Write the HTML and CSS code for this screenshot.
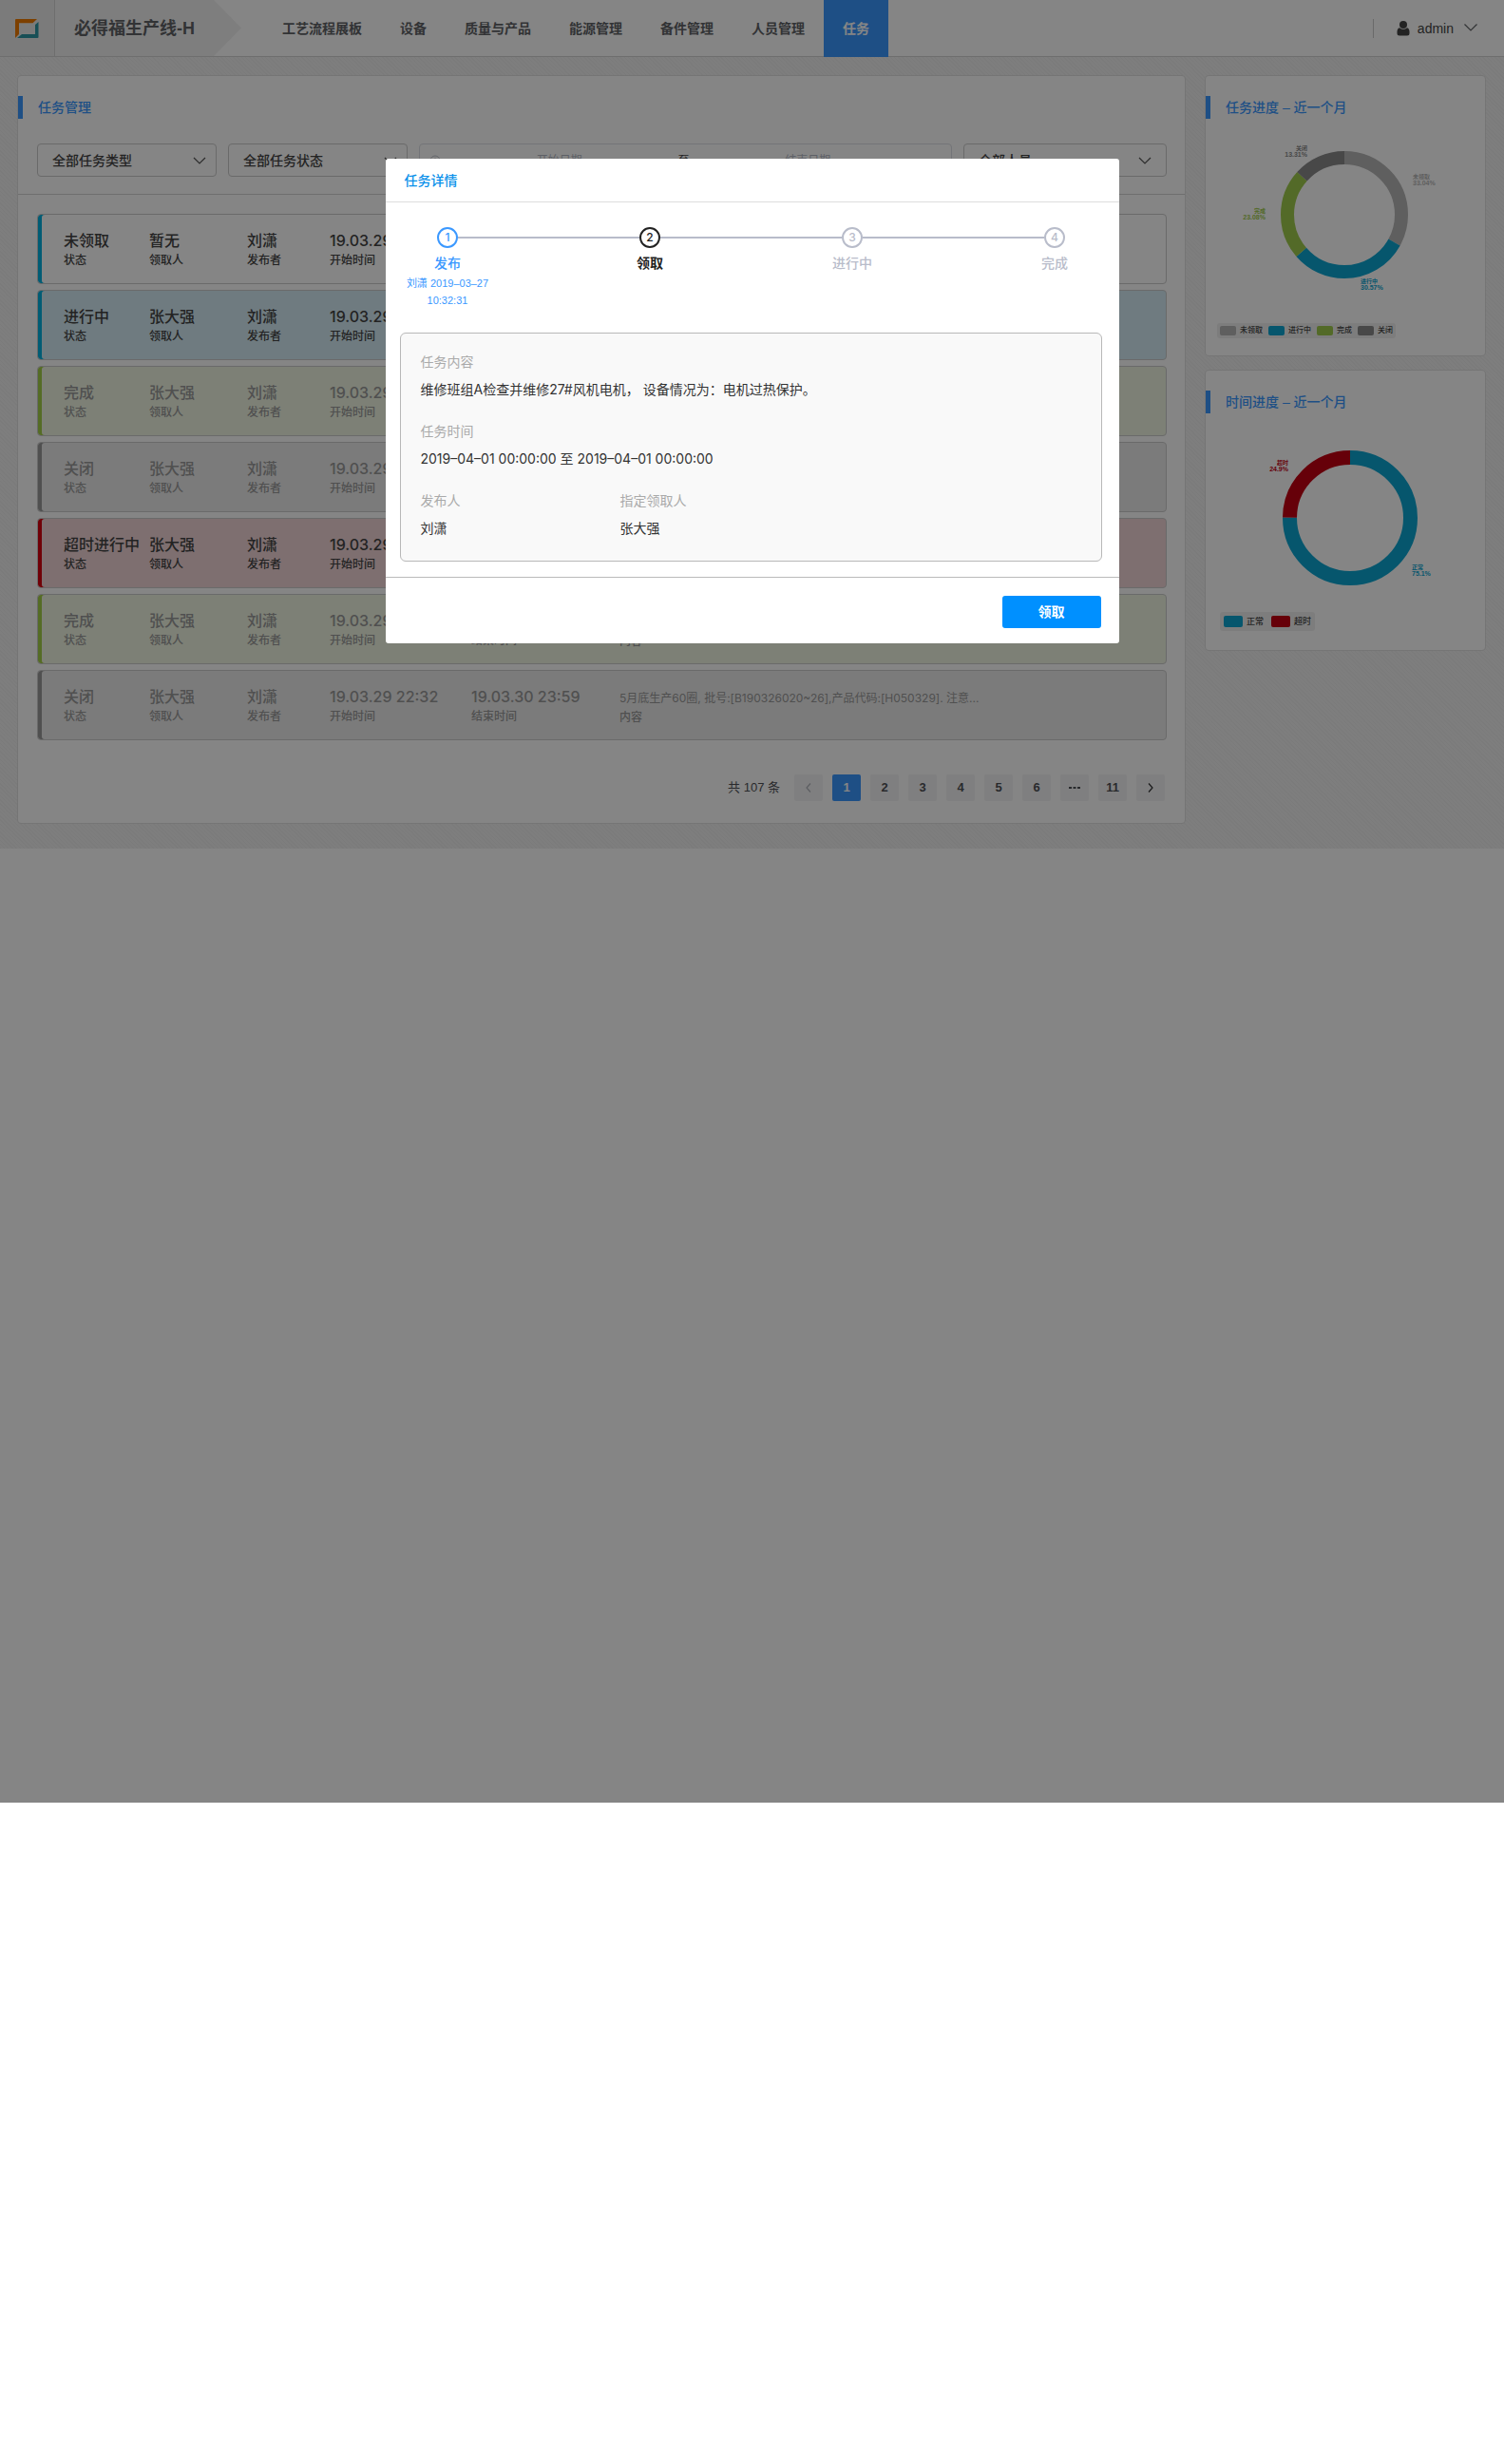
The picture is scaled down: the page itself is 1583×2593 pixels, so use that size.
FILE: index.html
```html
<!DOCTYPE html>
<html lang="zh-CN">
<head>
<meta charset="utf-8">
<title>任务管理</title>
<meta name="viewport" content="width=device-width, initial-scale=1">
<link rel="stylesheet" href="styles.css">
</head>
<body>
<div class="page">
  <header class="header">
    <a class="logo" href="#" aria-label="首页">
      <svg width="26" height="20" viewBox="0 0 26 20" aria-hidden="true">
        <path d="M0 1Q0 0 1 0H23L18.500 4.300H4V16L0 20Z" fill="#f07c00"/>
        <path d="M24.500 3V19Q24.500 20 23.500 20H2L7 16H21V6Z" fill="#2f97a6"/>
      </svg>
    </a>
    <h1 class="line-name">必得福生产线-H</h1>
    <nav class="nav">
      <a href="#">工艺流程展板</a>
      <a href="#">设备</a>
      <a href="#">质量与产品</a>
      <a href="#">能源管理</a>
      <a href="#">备件管理</a>
      <a href="#">人员管理</a>
      <a href="#" class="active" aria-current="page">任务</a>
    </nav>
    <button class="user" type="button">
      <svg width="14" height="16" viewBox="0 0 14 16" aria-hidden="true"><circle cx="7" cy="4" r="4" fill="#444"/><path d="M3 7.200Q7 10.500 11 7.200Q13.500 8 13.500 11.500V13Q13.500 15.500 11 15.500H3Q.5 15.500 .5 13V11.500Q.5 8 3 7.200Z" fill="#444"/></svg>
      <span>admin</span>
      <svg class="user-arrow" width="14" height="8" viewBox="0 0 14 8" aria-hidden="true"><path d="M.5 .5L7 7L13.500 .5" fill="none" stroke="#606266" stroke-width="1.200"/></svg>
    </button>
  </header>

  <main class="main">
    <section class="card tasks">
      <h2 class="card-title">任务管理</h2>
      <form class="filters">
        <div class="select">
          <select aria-label="任务类型"><option>全部任务类型</option></select>
          <svg width="14" height="8" viewBox="0 0 14 8" aria-hidden="true"><path d="M1 1L7 7L13 1" fill="none" stroke="#555" stroke-width="1.200"/></svg>
        </div>
        <div class="select">
          <select aria-label="任务状态"><option>全部任务状态</option></select>
          <svg width="14" height="8" viewBox="0 0 14 8" aria-hidden="true"><path d="M1 1L7 7L13 1" fill="none" stroke="#555" stroke-width="1.200"/></svg>
        </div>
        <div class="range">
          <svg width="12" height="12" viewBox="0 0 12 12" aria-hidden="true"><circle cx="6" cy="6" r="5" fill="none" stroke="#c0c4cc"/><path d="M6 3V6.500H8.500" fill="none" stroke="#c0c4cc"/></svg>
          <input type="text" placeholder="开始日期" aria-label="开始日期">
          <span>至</span>
          <input type="text" placeholder="结束日期" aria-label="结束日期">
        </div>
        <div class="select">
          <select aria-label="人员"><option>全部人员</option></select>
          <svg width="14" height="8" viewBox="0 0 14 8" aria-hidden="true"><path d="M1 1L7 7L13 1" fill="none" stroke="#555" stroke-width="1.200"/></svg>
        </div>
      </form>

      <ul class="task-list">
        <li class="task new">
          <div><b>未领取</b><small>状态</small></div><div><b>暂无</b><small>领取人</small></div><div><b>刘潇</b><small>发布者</small></div>
          <div><b>19.03.29 22:32</b><small>开始时间</small></div><div><b>19.03.30 23:59</b><small>结束时间</small></div>
          <div class="content"><b>5月底生产60圈, 批号:[B190326020~26],产品代码:[H050329]. 注意...</b><small>内容</small></div>
        </li>
        <li class="task doing">
          <div><b>进行中</b><small>状态</small></div><div><b>张大强</b><small>领取人</small></div><div><b>刘潇</b><small>发布者</small></div>
          <div><b>19.03.29 22:32</b><small>开始时间</small></div><div><b>19.03.30 23:59</b><small>结束时间</small></div>
          <div class="content"><b>5月底生产60圈, 批号:[B190326020~26],产品代码:[H050329]. 注意...</b><small>内容</small></div>
        </li>
        <li class="task done">
          <div><b>完成</b><small>状态</small></div><div><b>张大强</b><small>领取人</small></div><div><b>刘潇</b><small>发布者</small></div>
          <div><b>19.03.29 22:32</b><small>开始时间</small></div><div><b>19.03.30 23:59</b><small>结束时间</small></div>
          <div class="content"><b>5月底生产60圈, 批号:[B190326020~26],产品代码:[H050329]. 注意...</b><small>内容</small></div>
        </li>
        <li class="task closed">
          <div><b>关闭</b><small>状态</small></div><div><b>张大强</b><small>领取人</small></div><div><b>刘潇</b><small>发布者</small></div>
          <div><b>19.03.29 22:32</b><small>开始时间</small></div><div><b>19.03.30 23:59</b><small>结束时间</small></div>
          <div class="content"><b>5月底生产60圈, 批号:[B190326020~26],产品代码:[H050329]. 注意...</b><small>内容</small></div>
        </li>
        <li class="task late">
          <div><b>超时进行中</b><small>状态</small></div><div><b>张大强</b><small>领取人</small></div><div><b>刘潇</b><small>发布者</small></div>
          <div><b>19.03.29 22:32</b><small>开始时间</small></div><div><b>19.03.30 23:59</b><small>结束时间</small></div>
          <div class="content"><b>5月底生产60圈, 批号:[B190326020~26],产品代码:[H050329]. 注意...</b><small>内容</small></div>
        </li>
        <li class="task done">
          <div><b>完成</b><small>状态</small></div><div><b>张大强</b><small>领取人</small></div><div><b>刘潇</b><small>发布者</small></div>
          <div><b>19.03.29 22:32</b><small>开始时间</small></div><div><b>19.03.30 23:59</b><small>结束时间</small></div>
          <div class="content"><b>5月底生产60圈, 批号:[B190326020~26],产品代码:[H050329]. 注意...</b><small>内容</small></div>
        </li>
        <li class="task closed">
          <div><b>关闭</b><small>状态</small></div><div><b>张大强</b><small>领取人</small></div><div><b>刘潇</b><small>发布者</small></div>
          <div><b>19.03.29 22:32</b><small>开始时间</small></div><div><b>19.03.30 23:59</b><small>结束时间</small></div>
          <div class="content"><b>5月底生产60圈, 批号:[B190326020~26],产品代码:[H050329]. 注意...</b><small>内容</small></div>
        </li>
      </ul>

      <nav class="pager" aria-label="分页">
        <span class="total">共 107 条</span>
        <button type="button" disabled aria-label="上一页"><svg width="6" height="10" viewBox="0 0 6 10"><path d="M5 .5L1 5L5 9.500" fill="none" stroke="#b0b4bc" stroke-width="1.200"/></svg></button>
        <button type="button" class="current">1</button>
        <button type="button">2</button>
        <button type="button">3</button>
        <button type="button">4</button>
        <button type="button">5</button>
        <button type="button">6</button>
        <button type="button" aria-label="更多"><svg width="12" height="4" viewBox="0 0 12 4"><path d="M0 1H3V3H0ZM4.500 1H7.500V3H4.500ZM9 1H12V3H9Z" fill="#505257"/></svg></button>
        <button type="button">11</button>
        <button type="button" aria-label="下一页"><svg width="6" height="10" viewBox="0 0 6 10"><path d="M1 .5L5 5L1 9.500" fill="none" stroke="#303133" stroke-width="1.200"/></svg></button>
      </nav>
    </section>

    <aside class="side">
      <section class="card chart">
        <h2 class="card-title">任务进度 – 近一个月</h2>
        <svg class="donut" viewBox="0 0 294 200" role="img" aria-label="任务进度">
          <g fill="none" stroke-width="14" transform="rotate(-90 146 86)">
            <circle cx="146" cy="86" r="60" pathLength="100" stroke="#b6b6b6" stroke-dasharray="33.04 66.96"/>
            <circle cx="146" cy="86" r="60" pathLength="100" stroke="#0da6d2" stroke-dasharray="30.57 69.43" stroke-dashoffset="-33.04"/>
            <circle cx="146" cy="86" r="60" pathLength="100" stroke="#a0cc4e" stroke-dasharray="23.08 76.92" stroke-dashoffset="-63.61"/>
            <circle cx="146" cy="86" r="60" pathLength="100" stroke="#8a8a8a" stroke-dasharray="13.31 86.69" stroke-dashoffset="-86.69"/>
          </g>
          <g class="end" fill="#8a8a8a"><text x="107" y="18">关闭</text><text class="pct" x="107" y="25">13.31%</text></g>
          <g fill="#b6b6b6"><text x="218" y="48">未领取</text><text class="pct" x="218" y="55">33.04%</text></g>
          <g class="end" fill="#a0cc4e"><text x="63" y="84">完成</text><text class="pct" x="63" y="91">23.08%</text></g>
          <g fill="#0da6d2"><text x="163" y="158">进行中</text><text class="pct" x="163" y="165">30.57%</text></g>
        </svg>
        <ul class="legend">
          <li class="c-new">未领取</li><li class="c-blue">进行中</li><li class="c-green">完成</li><li class="c-closed">关闭</li>
        </ul>
      </section>
      <section class="card chart">
        <h2 class="card-title">时间进度 – 近一个月</h2>
        <svg class="donut" viewBox="0 0 294 200" role="img" aria-label="时间进度">
          <g fill="none" stroke-width="15" transform="rotate(-90 152 95)">
            <circle cx="152" cy="95" r="63.500" pathLength="100" stroke="#0da6d2" stroke-dasharray="75.1 24.9"/>
            <circle cx="152" cy="95" r="63.500" pathLength="100" stroke="#c30013" stroke-dasharray="24.9 75.1" stroke-dashoffset="-75.1"/>
          </g>
          <g class="end" fill="#c30013"><text x="87" y="39">超时</text><text class="pct" x="87" y="46">24.9%</text></g>
          <g fill="#0da6d2"><text x="217" y="149">正常</text><text class="pct" x="217" y="156">75.1%</text></g>
        </svg>
        <ul class="legend large">
          <li class="c-blue">正常</li><li class="c-red">超时</li>
        </ul>
      </section>
    </aside>
  </main>

  <div class="overlay">
    <div class="modal" role="dialog" aria-modal="true" aria-labelledby="modal-title">
      <h2 class="modal-title" id="modal-title">任务详情</h2>
      <div class="modal-body">
        <ol class="steps">
          <li class="finished"><i>1</i><strong>发布</strong><small>刘潇 2019–03–27<br>10:32:31</small></li>
          <li class="active"><i>2</i><strong>领取</strong></li>
          <li><i>3</i><strong>进行中</strong></li>
          <li><i>4</i><strong>完成</strong></li>
        </ol>
        <dl class="detail">
          <div class="wide"><dt>任务内容</dt><dd>维修班组A检查并维修27#风机电机， 设备情况为：电机过热保护。</dd></div>
          <div class="wide"><dt>任务时间</dt><dd>2019–04–01 00:00:00 至 2019–04–01 00:00:00</dd></div>
          <div><dt>发布人</dt><dd>刘潇</dd></div>
          <div><dt>指定领取人</dt><dd>张大强</dd></div>
        </dl>
      </div>
      <footer class="modal-footer"><button type="button">领取</button></footer>
    </div>
  </div>
</div>
</body>
</html>
```
FILE: styles.css
```css
* {
  box-sizing: border-box;
}

body,
h1,
h2,
ul,
ol,
dl,
dd {
  margin: 0;
  padding: 0;
}

body {
  background: #fff;
  color: #444;
  font: 14px/20px "Liberation Sans", "Noto Sans CJK SC", sans-serif;
}

ul,
ol {
  list-style: none;
}

button,
input,
select {
  margin: 0;
  border: 0;
  font: inherit;
  color: inherit;
}

a {
  color: inherit;
  text-decoration: none;
}

.page {
  position: relative;
  min-height: 1897px;
}

/* Header */
.header {
  display: flex;
  height: 60px;
  border-bottom: 1px solid #d4d4d4;
}

.logo {
  display: flex;
  align-items: center;
  width: 58px;
  padding-left: 16px;
  border-right: 1px solid #d4d4d4;
  background: #ececec;
}

.line-name {
  width: 196px;
  padding-left: 20px;
  background: #f2f2f2;
  clip-path: polygon(0 0, 167px 0, 100% 50%, 167px 100%, 0 100%);
  color: #606266;
  font-size: 18px;
  line-height: 60px;
}

.nav {
  display: flex;
  flex: 1;
  margin-left: 23px;
  color: #606266;
  font-weight: bold;
  line-height: 60px;
}

.nav a {
  height: 60px;
  padding: 0 20px;
}

.nav .active {
  background: #3a98ff;
  color: #fff;
}

.user {
  display: flex;
  align-items: center;
  align-self: center;
  gap: 8px;
  height: 20px;
  margin-right: 28px;
  padding: 0 0 0 24px;
  border-left: 1px solid #ccc;
  background: none;
}

.user-arrow {
  margin: 0 0 2px 3px;
}

/* Page layout */
.main {
  display: flex;
  align-items: flex-start;
  gap: 20px;
  padding: 19px 19px 26px 18px;
  background: repeating-linear-gradient(45deg, #ececec 0 1px, #f1f1f1 1px 3px);
}

.card {
  border: 1px solid #e0e0e0;
  border-radius: 4px;
  background: #fff;
}

.card-title {
  margin-top: 21px;
  padding-left: 16px;
  border-left: 5px solid #3a98ff;
  color: #3a98ff;
  font-size: 14px;
  font-weight: 500;
  line-height: 24px;
}

.tasks {
  flex: 1;
  min-width: 0;
}

.side {
  display: flex;
  flex: none;
  flex-direction: column;
  gap: 14px;
  width: 296px;
}

/* Filters */
.filters {
  display: grid;
  grid-template-columns: 189px 189px 1fr 214px;
  gap: 12px;
  padding: 26px 19px 18px 20px;
  border-bottom: 1px solid #d4d4d4;
}

.select {
  position: relative;
}

.select select {
  width: 100%;
  height: 35px;
  padding: 0 15px;
  border: 1px solid #ccc;
  border-radius: 4px;
  background: #fff;
  font-weight: 500;
  appearance: none;
}

.select svg {
  position: absolute;
  top: 14px;
  right: 11px;
  pointer-events: none;
}

.select:last-child svg {
  right: 16px;
}

.range {
  display: flex;
  align-items: center;
  height: 35px;
  padding: 0 26px 0 10px;
  border: 1px solid #dcdfe6;
  border-radius: 4px;
  font-size: 12px;
}

.range input {
  flex: 1;
  min-width: 0;
  background: none;
  text-align: center;
}

.range input::placeholder {
  color: #b4b8c4;
}

/* Task rows */
.task-list {
  display: grid;
  gap: 6px;
  padding: 20px 19px 0 20px;
}

.task {
  display: grid;
  grid-template-columns: 90px 103px 87px 149px 156px 1fr;
  height: 74px;
  padding: 17px 0 0 27px;
  border: 1px solid #ccc;
  border-radius: 4px;
  box-shadow: inset 4px 0 var(--bar);
  font-family: Inter, "Noto Sans CJK SC", sans-serif;
}

.task b,
.task small {
  display: block;
  font-weight: 500;
  white-space: nowrap;
}

.task b {
  margin-bottom: 1px;
  font-size: 16px;
  line-height: 20px;
}

.task small {
  font-size: 12px;
  line-height: 20px;
}

.task .content b {
  margin: 2px 0 0;
  font-size: 12px;
  font-weight: 400;
}

.new {
  --bar: #00b0de;
}

.doing {
  --bar: #00b0de;
  background: #d5ecf5;
}

.done {
  --bar: #a4cf48;
  background: #eff5e2;
  color: #999;
}

.closed {
  --bar: #999;
  background: #ececec;
  color: #999;
}

.late {
  --bar: #d6000f;
  background: #f2d5d7;
}

/* Pagination */
.pager {
  display: flex;
  align-items: center;
  justify-content: flex-end;
  gap: 10px;
  padding: 36px 21px 23px;
  color: #505257;
  font-size: 13px;
}

.total {
  margin-right: 5px;
}

.pager button {
  display: flex;
  align-items: center;
  justify-content: center;
  width: 30px;
  height: 28px;
  padding: 0;
  border-radius: 2px;
  background: #f4f4f5;
  font-weight: bold;
}

.pager .current {
  background: #3a98ff;
  color: #fff;
}

/* Charts */
.chart {
  height: 296px;
}

.donut {
  display: block;
  width: 100%;
  margin-top: 15px;
  font-size: 6px;
  font-weight: bold;
}

.donut .end {
  text-anchor: end;
}

.donut .pct {
  font-size: 7px;
}

.legend {
  display: flex;
  gap: 6px;
  width: max-content;
  padding: 3px;
  margin: 0 0 0 12px;
  border-radius: 3px;
  background: #f0f0f0;
  font-size: 8px;
  font-weight: 500;
  line-height: 10px;
}

.legend li {
  display: flex;
  gap: 4px;
}

.legend li::before {
  width: 17px;
  height: 10px;
  border-radius: 2px;
  background: var(--swatch);
  content: "";
}

.legend.large {
  gap: 8px;
  padding: 4px;
  margin: -6px 0 0 15px;
  font-size: 9px;
  line-height: 12px;
}

.legend.large li::before {
  width: 20px;
  height: 12px;
}

.c-new {
  --swatch: #b6b6b6;
}

.c-blue {
  --swatch: #0da6d2;
}

.c-green {
  --swatch: #a0cc4e;
}

.c-closed {
  --swatch: #8a8a8a;
}

.c-red {
  --swatch: #c30013;
}

/* Task detail dialog */
.overlay {
  position: absolute;
  inset: 0;
  padding: 167px 20px 0;
  background: rgba(0, 0, 0, .48);
}

.modal {
  max-width: 772px;
  margin: 0 auto;
  border-radius: 3px;
  background: #fff;
}

.modal-title {
  padding: 2px 20px 0;
  border-bottom: 1px solid #ddd;
  color: #0a90ea;
  font-size: 14px;
  font-weight: 500;
  line-height: 43px;
}

.modal-body {
  padding: 26px 18px 16px 15px;
}

.steps {
  display: flex;
  min-height: 111px;
  margin: 0 -57px 0 -56px;
  color: #b8bcca;
}

.steps li {
  position: relative;
  display: flex;
  flex: 1;
  flex-direction: column;
  align-items: center;
}

.steps li:not(:last-child)::after {
  position: absolute;
  top: 10px;
  right: calc(-50% + 11px);
  left: calc(50% + 11px);
  height: 2px;
  background: #b8bcca;
  content: "";
}

.steps i {
  width: 22px;
  height: 22px;
  border: 2px solid;
  border-radius: 50%;
  font-family: Inter, sans-serif;
  font-size: 12px;
  font-style: normal;
  font-weight: 500;
  line-height: 18px;
  text-align: center;
}

.steps strong {
  margin: 6px 0 2px;
  font-weight: 500;
}

.steps small {
  font-size: 11px;
  line-height: 18px;
  text-align: center;
}

.steps .finished {
  color: #3a98ff;
}

.steps .active {
  color: #222;
}

.steps .active strong {
  font-weight: bold;
}

.detail {
  display: grid;
  grid-template-columns: 210px 1fr;
  row-gap: 24px;
  padding: 20px 21px 24px;
  border: 1px solid #b8b8b8;
  border-radius: 6px;
  background: #f9f9f9;
  font-family: Inter, "Noto Sans CJK SC", sans-serif;
}

.detail .wide {
  grid-column: 1 / -1;
}

.detail dt {
  margin-bottom: 9px;
  color: #aaa;
}

.detail dd {
  color: #333;
}

.modal-footer {
  display: flex;
  justify-content: flex-end;
  padding: 19px 19px 16px;
  border-top: 1px solid #bbb;
}

.modal-footer button {
  width: 104px;
  height: 34px;
  border-radius: 3px;
  background: #0090ff;
  color: #fff;
  font-weight: bold;
}
```
